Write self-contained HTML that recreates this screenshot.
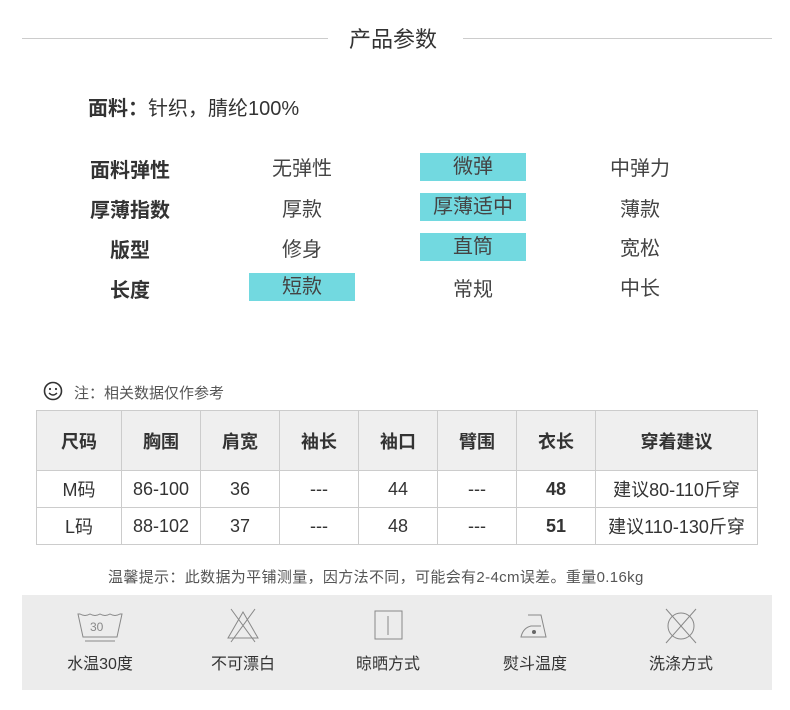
<!DOCTYPE html><html><head><meta charset="utf-8"><style>
body{margin:0;width:790px;height:710px;background:#fff;font-family:"Liberation Sans","Noto Sans CJK SC",sans-serif;color:#333;position:relative;overflow:hidden}
.a{position:absolute;white-space:nowrap}
.ln{position:absolute;height:1px;background:#ccc;top:38px}
.lab{position:absolute;font-weight:bold;font-size:20px;width:90px;text-align:center;left:85px}
.v{position:absolute;font-size:20px;width:106px;text-align:center;line-height:28px;color:#444}
.h{background:#72d9e0}
table{position:absolute;left:36px;top:410px;border-collapse:collapse;font-size:18px;color:#333}
td{border:1px solid #ccc;text-align:center;padding:0}
tr.hd td{background:#efefef;font-weight:bold;height:59px;font-size:18px}
tr.r td{height:36px}
.gb{position:absolute;left:22px;top:595px;width:750px;height:95px;background:#ececec}
.ic{position:absolute;top:13px;width:150px;text-align:center}
.ic svg{display:block;margin:0 auto}
.ic div{font-size:16px;margin-top:6px;color:#333}
</style></head><body>
<div class="ln" style="left:22px;width:306px"></div>
<div class="ln" style="left:463px;width:309px"></div>
<div class="a" style="left:349px;top:22px;font-size:22px;color:#333">产品参数</div>
<div class="a" style="left:88px;top:92px;font-size:20px"><b>面料：</b>针织，腈纶100%</div>
<div class="lab" style="top:154px">面料弹性</div>
<div class="lab" style="top:194px">厚薄指数</div>
<div class="lab" style="top:234px">版型</div>
<div class="lab" style="top:274px">长度</div>
<div class="v" style="left:249px;top:155px">无弹性</div>
<div class="v h" style="left:420px;top:153px">微弹</div>
<div class="v" style="left:587px;top:155px">中弹力</div>
<div class="v" style="left:249px;top:196px">厚款</div>
<div class="v h" style="left:420px;top:193px">厚薄适中</div>
<div class="v" style="left:587px;top:196px">薄款</div>
<div class="v" style="left:249px;top:236px">修身</div>
<div class="v h" style="left:420px;top:233px">直筒</div>
<div class="v" style="left:587px;top:235px">宽松</div>
<div class="v h" style="left:249px;top:273px">短款</div>
<div class="v" style="left:420px;top:276px">常规</div>
<div class="v" style="left:587px;top:275px">中长</div>
<svg class="a" style="left:43px;top:381px" width="20" height="20" viewBox="0 0 20 20"><circle cx="10" cy="10" r="8.5" fill="none" stroke="#333" stroke-width="1.6"/><circle cx="7" cy="8" r="1.1" fill="#333"/><circle cx="13" cy="8" r="1.1" fill="#333"/><path d="M6 12q4 4 8 0" fill="none" stroke="#333" stroke-width="1.4"/></svg>
<div class="a" style="left:74px;top:382px;font-size:15px;color:#555">注：相关数据仅作参考</div>
<table>
<tr class="hd"><td style="width:84px">尺码</td><td style="width:78px">胸围</td><td style="width:78px">肩宽</td><td style="width:78px">袖长</td><td style="width:78px">袖口</td><td style="width:78px">臂围</td><td style="width:78px">衣长</td><td style="width:161px">穿着建议</td></tr>
<tr class="r"><td>M码</td><td>86-100</td><td>36</td><td>---</td><td>44</td><td>---</td><td><b>48</b></td><td>建议80-110斤穿</td></tr>
<tr class="r"><td>L码</td><td>88-102</td><td>37</td><td>---</td><td>48</td><td>---</td><td><b>51</b></td><td>建议110-130斤穿</td></tr>
</table>
<div class="a" style="left:108px;top:566px;font-size:15px;color:#555;letter-spacing:0.35px">温馨提示：此数据为平铺测量，因方法不同，可能会有2-4cm误差。重量0.16kg</div>
<div class="gb">
<div class="ic" style="left:3px"><svg width="50" height="36" viewBox="0 0 50 36"><path d="M3 6l2 0q5 3 10 0q5 3 10 0q5 3 10 0q5 3 10 0l2 0l-5 23h-34z" fill="none" stroke="#888"/><text x="15" y="23" font-size="12" fill="#888" font-family="Liberation Sans">30</text><path d="M10 33h30" stroke="#888"/></svg><div>水温30度</div></div>
<div class="ic" style="left:146px"><svg width="40" height="36" viewBox="0 0 40 36"><path d="M20 4l15 26h-30z" fill="none" stroke="#888"/><path d="M8 1l24 33M32 1l-24 33" stroke="#888"/></svg><div>不可漂白</div></div>
<div class="ic" style="left:291px"><svg width="40" height="36" viewBox="0 0 40 36"><rect x="7" y="3" width="27" height="28" fill="none" stroke="#888"/><path d="M20 8v19" stroke="#888"/></svg><div>晾晒方式</div></div>
<div class="ic" style="left:438px"><svg width="40" height="36" viewBox="0 0 40 36"><path d="M13 7h13l5 22h-25q2-9 10-11h10" fill="none" stroke="#888"/><circle cx="19" cy="24" r="2" fill="#666"/></svg><div>熨斗温度</div></div>
<div class="ic" style="left:584px"><svg width="40" height="36" viewBox="0 0 40 36"><circle cx="20" cy="18" r="13" fill="none" stroke="#888"/><path d="M5 1l30 34M35 1l-30 34" stroke="#888"/></svg><div>洗涤方式</div></div>
</div>
</body></html>
